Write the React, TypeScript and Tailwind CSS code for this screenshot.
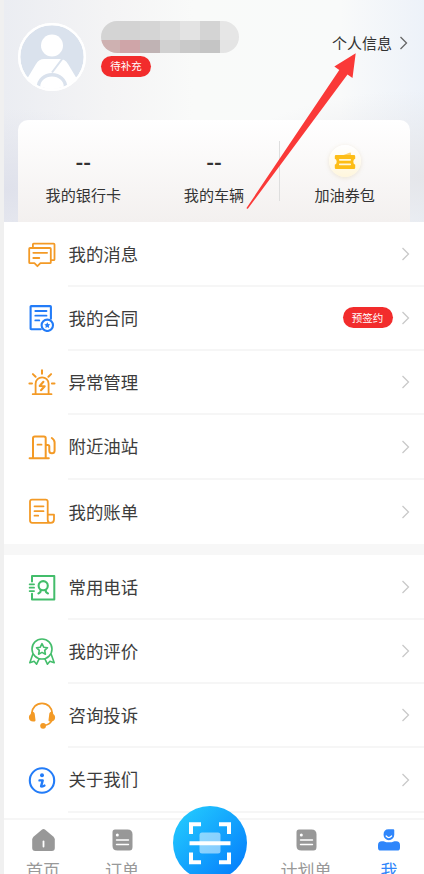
import type { ReactNode } from "react";

const ORANGE = "#f39a26";
const BLUE = "#237cf8";
const GREEN = "#43bd6b";

function LineIcon({ color, children }: { color: string; children: ReactNode }) {
  return (
    <svg
      width="28"
      height="28"
      viewBox="0 0 28 28"
      fill="none"
      stroke={color}
      strokeWidth="1.8"
      strokeLinecap="round"
      strokeLinejoin="round"
      className="shrink-0"
    >
      {children}
    </svg>
  );
}

const icons = {
  message: (
    <LineIcon color={ORANGE}>
      <path d="M4.9 7.5V4.3q0-.7.7-.7h20q.9 0 .9.8v15q0 .8-.8.8h-2.4" />
      <path d="M2 8h20q.8 0 .8.8v13.6q0 .8-.8.8h-9.6l-3 3-3-3H2q-.8 0-.8-.8V8.8Q1.2 8 2 8Z" />
      <path d="M5.3 12.8h13.8M5.3 18h6" />
    </LineIcon>
  ),
  contract: (
    <LineIcon color={BLUE}>
      <path d="M12.8 25.2H3.2q-.6 0-.6-.6V2.7q0-.6.6-.6h19q.7 0 .7.6v12" strokeWidth="2.1" />
      <path d="M7.3 7h11.2M7.3 11.7h11.2M7.3 16.4h4" />
      <circle cx="19.3" cy="21.3" r="5.7" strokeWidth="2.1" />
      <path d="m19.3 18.200.9 1.900 2.100.3-1.500 1.400.4 2.100-1.900-1-1.900 1 .4-2.100-1.500-1.400 2.100-.3Z" fill={BLUE} stroke="none" />
    </LineIcon>
  ),
  alarm: (
    <LineIcon color={ORANGE}>
      <path d="M4.7 26.2h18.8M7.6 26v-10.200a6.500 6.500 0 0 1 13 0V26" />
      <path d="M14 2.300v3.500M4.900 6.100l2.700 2.600M23.100 6.100l-2.700 2.600M1.400 15.600h2.600M23.900 15.600h2.600" strokeWidth="2" />
      <path d="m15.400 13.800-3.700 4.200 5 .2-3.700 4" strokeWidth="2.1" />
    </LineIcon>
  ),
  gas: (
    <LineIcon color={ORANGE}>
      <path d="M5 25V5.200Q5 3.400 6.800 3.400h9.100q1.800 0 1.800 1.800V25M1.600 25.200h19.200" strokeWidth="2" />
      <path d="M9.500 11.700h4" />
      <path d="M18 12h1.800q1.500 0 1.500 1.500v4.300q0 2.500 2.700 2.500 2.500 0 2.600-2.600V9.600Q26.600 6.800 23.800 5" strokeWidth="2" />
    </LineIcon>
  ),
  bill: (
    <LineIcon color={ORANGE}>
      <path d="M19.700 17.700V4.600q0-2-2-2H4q-2 0-2 2v19q0 2.200 2.200 2.200h18.500q3.300 0 3.300-3.300v-4.800h-6.300v5q0 3.100 3 3.100" />
      <path d="M6.500 9.300h9M6.500 14.200h9M6.500 18.700h3.700" />
    </LineIcon>
  ),
  phone: (
    <LineIcon color={GREEN}>
      <path d="M4 8.500V2.900h22.300v23.500H4v-5.600" strokeWidth="2" />
      <path d="M1.600 11.300h4.500M1.600 14.700h4.500M1.600 18.100h4.500" strokeWidth="1.7" />
      <circle cx="15.200" cy="12.700" r="4.600" strokeWidth="2.1" />
      <path d="M12.700 16.700q.5 2.600-2.300 3.700M17.700 16.700q-.5 2.600 2.300 3.700" strokeWidth="2.1" />
    </LineIcon>
  ),
  medal: (
    <LineIcon color={GREEN}>
      <circle cx="14" cy="12" r="10" strokeWidth="1.6" />
      <path d="m14 6.700 1.700 3.500 3.800.5-2.800 2.700.7 3.800-3.400-1.800-3.400 1.800.7-3.800-2.800-2.700 3.800-.5Z" strokeWidth="1.6" />
      <path d="m4.800 17.300-3 8.400 4.300-1.400 2.500 2.900 2.500-5.400M23.200 17.300l3 8.400-4.300-1.400-2.500 2.900-2.500-5.400" strokeWidth="1.6" />
    </LineIcon>
  ),
  headset: (
    <LineIcon color={ORANGE}>
      <path d="M3.700 12.500C4.200 6.500 8.300 2.400 14 2.400s9.800 4.100 10.300 10.100M23.700 19.500q-1.800 4.200-7.700 5" />
      <path d="M4.800 10.700c1.100.2 1.700.9 1.900 2l.8 6.200c.1 1-.7 1.500-1.600 1.600-2.800.3-5-1.100-5-3.900 0-2.200.9-3.200 2-3.700.4-1.400.8-2.300 1.900-2.200ZM23.200 10.700c-1.100.2-1.700.9-1.900 2l-.8 6.200c-.1 1 .7 1.500 1.600 1.600 2.800.3 5-1.100 5-3.900 0-2.200-.9-3.200-2-3.700-.4-1.400-.8-2.300-1.900-2.200Z" fill={ORANGE} stroke="none" />
      <circle cx="15.100" cy="24.800" r="2.900" fill={ORANGE} stroke="none" />
    </LineIcon>
  ),
  info: (
    <LineIcon color={BLUE}>
      <circle cx="14" cy="14.500" r="12.200" strokeWidth="2.1" />
      <circle cx="14" cy="9.300" r="2" fill={BLUE} stroke="none" />
      <path d="M11.500 14.400h3.200l-1.600 6q2 .3 3.300-.8" strokeWidth="2.4" />
    </LineIcon>
  ),
};

type Item = { label: string; icon: ReactNode; tag?: string };

const mainItems: Item[] = [
  { label: "我的消息", icon: icons.message },
  { label: "我的合同", icon: icons.contract, tag: "预签约" },
  { label: "异常管理", icon: icons.alarm },
  { label: "附近油站", icon: icons.gas },
  { label: "我的账单", icon: icons.bill },
];

const moreItems: Item[] = [
  { label: "常用电话", icon: icons.phone },
  { label: "我的评价", icon: icons.medal },
  { label: "咨询投诉", icon: icons.headset },
  { label: "关于我们", icon: icons.info },
];

function Chevron({ className }: { className: string }) {
  return (
    <svg width="9" height="14" viewBox="0 0 9 14" fill="none" stroke="currentColor" strokeWidth="1.3" className={className}>
      <path d="m1.500 1 6 6-6 6" />
    </svg>
  );
}

function Tag({ children }: { children: ReactNode }) {
  return (
    <span className="flex h-[21px] w-[50px] items-center justify-center rounded-full bg-[#f22c2c] text-[10.5px] leading-none text-white">
      {children}
    </span>
  );
}

function Row({ item, last }: { item: Item; last?: boolean }) {
  return (
    <div className="flex h-[64.3px] pl-6">
      <div className="flex w-10 items-center pb-0.5">{item.icon}</div>
      <div className={`flex flex-1 items-center pr-[14.5px] ${last ? "" : "border-b-2 border-[#f6f6f6]"}`}>
        <span className="flex-1 pl-[0.5px] text-[17.4px] text-[#3c3c3c]">{item.label}</span>
        {item.tag ? <Tag>{item.tag}</Tag> : null}
        <Chevron className="ml-2 text-[#c9c9c9]" />
      </div>
    </div>
  );
}

function Avatar() {
  return (
    <svg width="68" height="68" viewBox="0 0 68 68" className="shrink-0">
      <defs>
        <clipPath id="face">
          <circle cx="34" cy="34" r="32" />
        </clipPath>
      </defs>
      <circle cx="34" cy="34" r="34" fill="#fff" />
      <circle cx="34" cy="34" r="31.8" fill="#dae2ed" />
      <g clipPath="url(#face)">
        <circle cx="34" cy="22.5" r="11" fill="#fff" />
        <path d="M6 61 18 41q3-5 8-5h16q5 0 8 5l12 20-5 9H12Z" fill="#fff" />
        <path d="M44.500 35.500 34 49.500" stroke="#dae2ed" strokeWidth="2" />
        <path d="M20.500 64c0-7 6-12.200 13.500-12.200S47.500 57 47.500 64" fill="none" stroke="#dae2ed" strokeWidth="3.4" />
        <path d="M25 66q9-8 18 0Z" fill="#fff" />
      </g>
      <circle cx="34" cy="34" r="32.8" fill="none" stroke="#fff" strokeWidth="2.3" />
    </svg>
  );
}

function HiddenName() {
  return (
    <div className="grid h-[32px] w-[138px] grid-cols-[19px_20px_20px_20px_20px_20px_19px] grid-rows-[19px_13px] overflow-hidden rounded-full">
      <i className="bg-[#d4d4d4]" />
      <i className="bg-[#d3d3d3]" />
      <i className="bg-[#d5d5d5]" />
      <i className="bg-[#dbdbdb]" />
      <i className="bg-[#e3e3e3]" />
      <i className="bg-[#d4d4d4]" />
      <i className="bg-[#e6e6e6]" />
      <i className="bg-[#ceb1b1]" />
      <i className="bg-[#cfa5a8]" />
      <i className="bg-[#c0b3b4]" />
      <i className="bg-[#d1d1d1]" />
      <i className="bg-[#c9c9c9]" />
      <i className="bg-[#c5c5c5]" />
      <i className="bg-[#e4e4e4]" />
    </div>
  );
}

function CouponIcon() {
  return (
    <span className="mt-0.5 flex size-8 items-center justify-center rounded-full bg-linear-to-b from-white to-[#fff6dc] shadow-[0_1px_4px_rgba(200,170,110,0.25)]">
      <svg width="22" height="18" viewBox="0 0 22 18">
        <path d="m9.500 3 6-2.300q1.500-.4 1.500 1.100V3Z" fill="#ffd36b" />
        <path d="M2 3h18q1.200 0 1.200 1.200v2.600q-1.900.6-1.900 3t1.900 3v2.900q0 1.300-1.200 1.300H2q-1.200 0-1.200-1.300v-2.900q1.900-.6 1.900-3t-1.900-3V4.200Q.8 3 2 3Z" fill="#fdbd16" />
        <path d="M5.800 7.800h10.400M5.800 12.300h10.400" stroke="#fff6dc" strokeWidth="1.7" strokeLinecap="round" />
      </svg>
    </span>
  );
}

function Stat({ label, children }: { label: string; children: ReactNode }) {
  return (
    <div className="flex flex-1 flex-col items-center pt-6">
      <div className="flex h-8 items-center">{children}</div>
      <div className="mt-2 text-[15.1px] leading-5 text-[#333]">{label}</div>
    </div>
  );
}

function Dashes() {
  return <span className="mt-0.5 text-[21px] font-bold leading-none text-[#333]">--</span>;
}

function ListIcon() {
  return (
    <svg width="21" height="22" viewBox="0 0 21 22" className="shrink-0">
      <path d="M3 .5h12.500q5 0 5 5V18q0 3.500-3 3.500h-12Q.5 21.500.5 17V3Q.5.5 3 .5Z" fill="#989898" />
      <circle cx="5.300" cy="6" r="1.500" fill="#fff" />
      <path d="M4.500 11h12M4.500 15.500h12" stroke="#fff" strokeWidth="1.4" strokeLinecap="round" />
    </svg>
  );
}

function Tab({ label, className, children }: { label: string; className: string; children: ReactNode }) {
  return (
    <div className={`flex flex-col items-center pt-[9px] ${className}`}>
      {children}
      <span className="mt-[7px] whitespace-nowrap text-[17px] leading-6">{label}</span>
    </div>
  );
}

function ScanButton() {
  return (
    <svg width="74" height="74" viewBox="0 0 74 74" className="-mt-[14px] shrink-0">
      <defs>
        <linearGradient id="scan" x1="0.1" y1="0.1" x2="0.85" y2="0.85">
          <stop offset="0" stopColor="#22c8fe" />
          <stop offset="1" stopColor="#0784fc" />
        </linearGradient>
      </defs>
      <circle cx="37" cy="37" r="37" fill="url(#scan)" />
      <rect x="26.500" y="26.500" width="21" height="21" rx="2.500" fill="#fff" fillOpacity=".5" />
      <path d="M18 28V18.200h10M46 18.200h10V28M18 46.500v9.800h10M46 56.300h10v-9.800" fill="none" stroke="#fff" strokeWidth="4" />
      <path d="M16.500 37.200h41" stroke="#fff" strokeWidth="4" />
    </svg>
  );
}

function Arrow() {
  return (
    <svg width="112" height="158" viewBox="0 0 112 158" className="pointer-events-none absolute left-[246px] top-[52px]">
      <path d="M109.700 1.200 88.300 14.500l5 3.600L.5 156q.3 1.200 1.500.5L101.500 22.500l5 3.500Z" fill="#fa3938" />
    </svg>
  );
}

export default function App() {
  return (
    <div className="relative h-[874px] w-[424px] overflow-hidden bg-[#f0f0f0] pl-1 font-['Noto_Sans_CJK_SC',sans-serif]">
      <div className="flex h-full flex-col bg-white">
        <header className="h-[222px] shrink-0 bg-[radial-gradient(ellipse_at_100%_80%,#e5e6ea_0%,transparent_35%),radial-gradient(ellipse_at_0%_85%,#dfe1eb_0%,transparent_30%),linear-gradient(90deg,#ebedf2_0%,#f4f4f5_25%,#f9faf9_45%,#f9fafa_80%,#edf2f9_100%)] px-[14px]">
          <div className="flex h-[120px] items-start">
            <div className="pt-[23px]">
              <Avatar />
            </div>
            <div className="ml-[15px] pt-[21px]">
              <HiddenName />
              <div className="mt-[3px]">
                <Tag>待补充</Tag>
              </div>
            </div>
            <div className="ml-auto mr-0.5 flex items-center pt-8 text-[15px] leading-[22px] text-[#333]">
              个人信息
              <Chevron className="ml-[7px] text-[#666]" />
            </div>
          </div>
          <div className="flex h-[102px] rounded-t-[10px] bg-linear-to-b from-white to-[#f3f0ef]">
            <Stat label="我的银行卡">
              <Dashes />
            </Stat>
            <Stat label="我的车辆">
              <Dashes />
            </Stat>
            <div className="-mr-px mt-[21px] h-[60px] w-px bg-[#dedede]" />
            <Stat label="加油券包">
              <CouponIcon />
            </Stat>
          </div>
        </header>

        <main className="h-[596px] shrink-0 overflow-hidden pt-[0.5px]">
          {mainItems.map((item, i) => (
            <Row key={item.label} item={item} last={i === mainItems.length - 1} />
          ))}
          <div className="h-[11.5px] bg-[#f7f7f7]" />
          {moreItems.map((item) => (
            <Row key={item.label} item={item} />
          ))}
        </main>

        <nav className="flex h-[56px] shrink-0 border-t-2 border-[#f6f6f6] text-[#999]">
          <Tab label="首页" className="w-[78px]">
            <svg width="23" height="22" viewBox="0 0 23 22" className="shrink-0">
              <path d="M9.800.7q1.700-1.200 3.400 0l8 6.800q1.600 1.400 1.600 3V19q0 3-3 3H3.200q-3 0-3-3v-8.500q0-1.600 1.600-3Z" fill="#989898" />
              <path d="M11.500 12.500v5" stroke="#fff" strokeWidth="1.8" strokeLinecap="round" />
            </svg>
          </Tab>
          <Tab label="订单" className="w-[80px]">
            <ListIcon />
          </Tab>
          <div className="flex w-[96px] justify-center">
            <ScanButton />
          </div>
          <Tab label="计划单" className="w-[96px]">
            <ListIcon />
          </Tab>
          <Tab label="我" className="w-[70px] text-[#2f86fb]">
            <svg width="24" height="22" viewBox="0 0 24 23" fill="#2f86fb" className="shrink-0">
              <path d="M11.500.3h5q1 0 1 1v4.800a5.600 5.600 0 1 1-11.200 0Q6.300.3 11.500.3Z" />
              <path d="M9 7.300q2.700 3.200 5.700 0" fill="none" stroke="#fff" strokeWidth="1.3" strokeLinecap="round" />
              <path d="M4.500 12.700h1.800q5.700 2.500 11.400 0h1.800q4 0 4 4v2.800q0 3-3 3h-17q-3 0-3-3v-2.800q0-4 4-4Z" />
            </svg>
          </Tab>
        </nav>
      </div>
      <Arrow />
    </div>
  );
}
